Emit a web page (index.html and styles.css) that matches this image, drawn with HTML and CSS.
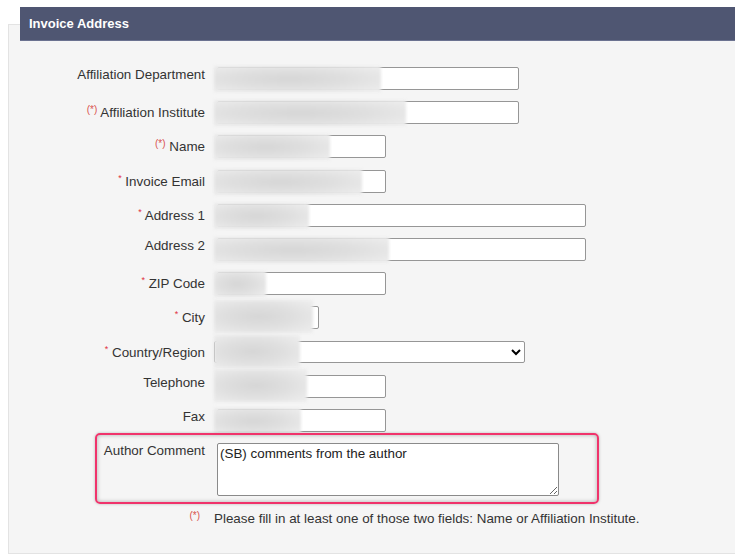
FILE: index.html
```html
<!DOCTYPE html>
<html>
<head>
<meta charset="utf-8">
<link rel="stylesheet" href="styles.css">
</head>
<body>
<div class="panel">
  <div class="header">Invoice Address</div>
  <form class="form">
    <div class="row">
      <label class="lbl top">Affiliation Department</label>
      <div class="field"><input class="inp w302" type="text"><span class="blur" style="width:167px"></span></div>
    </div>
    <div class="row">
      <label class="lbl"><span class="opt">(*)</span> Affiliation Institute</label>
      <div class="field"><input class="inp w302" type="text"><span class="blur" style="width:192px"></span></div>
    </div>
    <div class="row">
      <label class="lbl"><span class="opt">(*)</span> Name</label>
      <div class="field"><input class="inp w169" type="text"><span class="blur" style="width:116px"></span></div>
    </div>
    <div class="row">
      <label class="lbl"><span class="req">*</span> Invoice Email</label>
      <div class="field"><input class="inp w169" type="text"><span class="blur" style="width:148px"></span></div>
    </div>
    <div class="row">
      <label class="lbl"><span class="req">*</span> Address 1</label>
      <div class="field"><input class="inp w369" type="text"><span class="blur" style="width:95px"></span></div>
    </div>
    <div class="row">
      <label class="lbl top">Address 2</label>
      <div class="field"><input class="inp w369" type="text"><span class="blur" style="width:175px"></span></div>
    </div>
    <div class="row">
      <label class="lbl"><span class="req">*</span> ZIP Code</label>
      <div class="field"><input class="inp w169" type="text"><span class="blur" style="width:52px"></span></div>
    </div>
    <div class="row">
      <label class="lbl"><span class="req">*</span> City</label>
      <div class="field"><input class="inp w102" type="text"><span class="blur tall" style="width:99px"></span></div>
    </div>
    <div class="row">
      <label class="lbl"><span class="req">*</span> Country/Region</label>
      <div class="field"><select class="sel"><option></option></select><span class="blur tall" style="width:86px"></span></div>
    </div>
    <div class="row">
      <label class="lbl top">Telephone</label>
      <div class="field"><input class="inp w169" type="text"><span class="blur tall" style="width:93px"></span></div>
    </div>
    <div class="row">
      <label class="lbl top">Fax</label>
      <div class="field"><input class="inp w169" type="text"><span class="blur" style="width:87px"></span></div>
    </div>
    <div class="row comment">
      <span class="highlight"></span>
      <label class="lbl top">Author Comment</label>
      <div class="field"><textarea class="ta">(SB) comments from the author</textarea></div>
    </div>
    <div class="row note">
      <span class="lbl"><span class="opt">(*)</span></span>
      <span class="note-text">Please fill in at least one of those two fields: Name or Affiliation Institute.</span>
    </div>
  </form>
</div>
</body>
</html>
```
FILE: styles.css
```css
html, body {
  margin: 0;
  padding: 0;
  background: #ffffff;
  overflow: hidden;
}
body {
  font-family: "Liberation Sans", Arial, sans-serif;
  font-size: 13.4px;
  color: #333333;
  height: 556px;
}
.panel {
  margin: 24px -20px 0 8px;
  height: 528px;
  background: #f5f5f5;
  border: 1px solid #e3e3e3;
}
.header {
  margin: -18px 0 0 11px;
  height: 34px;
  background: #4f5672;
  border-bottom: 1px solid #6b7290;
  box-sizing: border-box;
  color: #ffffff;
  font-weight: bold;
  font-size: 13px;
  line-height: 33px;
  padding-left: 9px;
}
.form {
  margin: 0;
  padding-top: 26px;
  display: flex;
  flex-direction: column;
  gap: 11.2px;
}
.row {
  display: grid;
  grid-template-columns: 196px 1fr;
  column-gap: 12px;
  align-items: center;
  position: relative;
}
.lbl {
  text-align: right;
  line-height: 15px;
  color: #333333;
}
.lbl.top {
  align-self: start;
}
.req {
  color: #e0303c;
  font-size: 9px;
  line-height: 0;
  vertical-align: 5px;
}
.opt {
  color: #d9534f;
  font-size: 10px;
  line-height: 0;
  vertical-align: 4px;
}
.field {
  position: relative;
  height: 23px;
}
.inp, .sel {
  display: block;
  box-sizing: border-box;
  height: 23px;
  margin: 0;
  border: 1px solid #969696;
  border-radius: 2px;
  background: #ffffff;
  font-family: "Liberation Sans", Arial, sans-serif;
  font-size: 13px;
  padding: 1px 3px;
}
.w302 { width: 302px; }
.w169 { width: 169px; }
.w369 { width: 369px; }
.w102 { width: 102px; }
.sel {
  width: 311px;
  margin-left: -3px;
  height: 22px;
  color: #000;
}
.blur {
  position: absolute;
  left: -3px;
  top: -1px;
  height: 26px;
  background: radial-gradient(ellipse at 45% 50%, #d6d6d6 0%, #dfdfdf 45%, #e9e9e9 80%, #eeeeee 100%);
  filter: blur(1.5px);
}
.blur.tall {
  top: -6px;
  height: 33px;
}
.comment .field {
  height: 53px;
}
.ta {
  display: block;
  box-sizing: border-box;
  width: 342px;
  height: 53px;
  margin: 0;
  border: 1px solid #8a8a8a;
  border-radius: 2px;
  background: #ffffff;
  font-family: "Liberation Sans", Arial, sans-serif;
  font-size: 13.4px;
  color: #222;
  padding: 2px 2px;
  resize: both;
}
.highlight {
  position: absolute;
  left: 86px;
  top: -10px;
  width: 504px;
  height: 71px;
  box-sizing: border-box;
  border: 2.5px solid #f0336b;
  border-radius: 5px;
  box-shadow: inset 0 0 4px rgba(0, 0, 0, 0.3), 0 0 3px rgba(0, 0, 0, 0.25);
  pointer-events: none;
}
.note {
  margin-top: 4px;
  align-items: center;
}
.note .lbl {
  padding-right: 5px;
}
.note-text {
  margin-left: -3px;
  line-height: 15px;
  color: #333;
}
```
